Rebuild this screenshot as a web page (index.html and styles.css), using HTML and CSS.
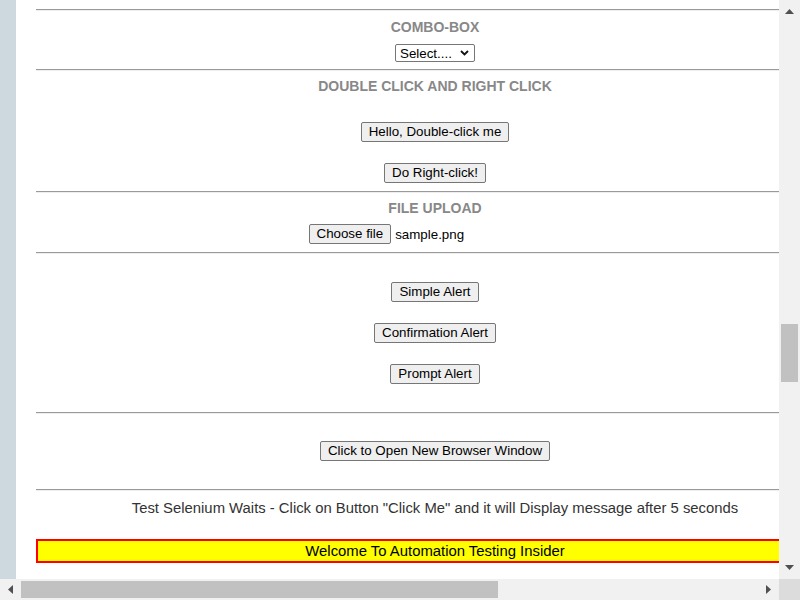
FILE: index.html
```html
<!DOCTYPE html>
<html>
<head>
<meta charset="utf-8">
<title>Automation Testing Insider</title>
<link rel="stylesheet" href="styles.css">
</head>
<body>
<div class="screen">
  <div class="viewport">
    <div class="page">
      <div class="side"></div>
      <div class="main">
        <div class="content">
          <hr class="rule">
          <h3 class="title t-combo">COMBO-BOX</h3>
          <div class="select">
            <span>Select....</span>
            <svg class="chev" width="9" height="6" viewBox="0 0 9 6"><path d="M1 1 L4.5 4.5 L8 1" fill="none" stroke="#111" stroke-width="1.8"/></svg>
          </div>
          <hr class="rule r-after-select">
          <h3 class="title t-normal">DOUBLE CLICK AND RIGHT CLICK</h3>
          <button class="btn b-first">Hello, Double-click me</button>
          <button class="btn b-next">Do Right-click!</button>
          <hr class="rule r-after-btn">
          <h3 class="title t-normal">FILE UPLOAD</h3>
          <div class="file">
            <button class="btn file-btn">Choose file</button>
            <span class="file-name">sample.png</span>
          </div>
          <hr class="rule r-after-btn">
          <button class="btn b-first">Simple Alert</button>
          <button class="btn b-next">Confirmation Alert</button>
          <button class="btn b-next">Prompt Alert</button>
          <hr class="rule r-after-alerts">
          <button class="btn b-window">Click to Open New Browser Window</button>
          <hr class="rule r-after-window">
          <p class="wait-text">Test Selenium Waits - Click on Button "Click Me" and it will Display message after 5 seconds</p>
          <div class="welcome">Welcome To Automation Testing Insider</div>
        </div>
      </div>
    </div>
  </div>
  <div class="vscroll">
    <svg class="arr-up" width="9" height="5" viewBox="0 0 9 5"><path d="M0 5 L4.5 0 L9 5 Z" fill="#505050"/></svg>
    <div class="vthumb"></div>
    <svg class="arr-down" width="9" height="5" viewBox="0 0 9 5"><path d="M0 0 L9 0 L4.5 5 Z" fill="#505050"/></svg>
  </div>
  <div class="hscroll">
    <svg class="arr-left" width="5" height="9" viewBox="0 0 5 9"><path d="M5 0 L5 9 L0 4.5 Z" fill="#505050"/></svg>
    <div class="hthumb"></div>
    <svg class="arr-right" width="5" height="9" viewBox="0 0 5 9"><path d="M0 0 L5 4.5 L0 9 Z" fill="#505050"/></svg>
  </div>
  <div class="corner"></div>
</div>
</body>
</html>
```
FILE: styles.css
```css
html, body {
  margin: 0;
  padding: 0;
}
body {
  font-family: "Liberation Sans", Arial, sans-serif;
  background: #fff;
}
.screen {
  display: grid;
  grid-template-columns: 779px 21px;
  grid-template-rows: 579px 21px;
  width: 800px;
  height: 600px;
  overflow: hidden;
}
.viewport {
  overflow: hidden;
  background: #fff;
}
.page {
  display: flex;
  height: 100%;
}
.side {
  flex: none;
  width: 16px;
  background: #cdd8df;
}
.main {
  flex: none;
  padding-left: 20px;
}
.content {
  width: 798px;
  display: flex;
  flex-direction: column;
  align-items: center;
  padding-top: 9px;
}
.rule {
  align-self: stretch;
  margin: 0;
  height: 0;
  border: 0;
  border-top: 1px solid #9a9a9a;
  border-bottom: 1px solid #eeeeee;
}
.r-after-select { margin-top: 7px; }
.r-after-btn { margin-top: 8px; }
.r-after-alerts { margin-top: 28px; }
.r-after-window { margin-top: 28px; }
.title {
  margin: 0;
  font-size: 14px;
  line-height: 16px;
  font-weight: bold;
  color: #888;
}
.t-combo { margin-top: 8px; }
.t-normal { margin-top: 7px; }
.select {
  margin-top: 9px;
  box-sizing: border-box;
  width: 80px;
  height: 18px;
  border: 1px solid #767676;
  border-radius: 2px;
  display: flex;
  align-items: center;
  justify-content: space-between;
  padding: 0 5px 0 4px;
  font-size: 13.33px;
  color: #000;
}
.chev { display: block; }
.btn {
  box-sizing: border-box;
  height: 20px;
  padding: 0 7px;
  margin: 0;
  border: 1px solid #767676;
  border-radius: 2px;
  background: #efefef;
  font-family: "Liberation Sans", Arial, sans-serif;
  font-size: 13.33px;
  line-height: 16px;
  color: #000;
}
.b-first { margin-top: 28px; }
.b-next { margin-top: 21px; }
.b-window { margin-top: 27px; }
.file {
  margin-top: 8px;
  width: 253px;
  display: flex;
  align-items: center;
}
.file-btn { margin-right: 4px; }
.file-name {
  font-size: 13.33px;
  color: #000;
}
.wait-text {
  margin: 8px 0 0;
  font-size: 14.85px;
  line-height: 19px;
  color: #333;
}
.welcome {
  align-self: stretch;
  margin-top: 21px;
  height: 24px;
  box-sizing: border-box;
  border: 2px solid #ff0000;
  background: #ffff00;
  text-align: center;
  font-size: 14.87px;
  line-height: 20px;
  color: #000;
}
.vscroll {
  background: #f1f1f1;
  display: flex;
  flex-direction: column;
  align-items: center;
}
.arr-up { margin-top: 9px; flex: none; }
.vthumb {
  flex: none;
  width: 17px;
  height: 58px;
  margin-top: 310px;
  background: #c1c1c1;
}
.arr-down { margin-top: auto; margin-bottom: 9px; flex: none; }
.hscroll {
  background: #f1f1f1;
  display: flex;
  align-items: center;
}
.arr-left { margin-left: 8px; flex: none; }
.hthumb {
  flex: none;
  width: 477px;
  height: 17px;
  margin-left: 8px;
  background: #c1c1c1;
}
.arr-right { margin-left: auto; margin-right: 8px; flex: none; }
.corner {
  background: #dcdcdc;
}
```
